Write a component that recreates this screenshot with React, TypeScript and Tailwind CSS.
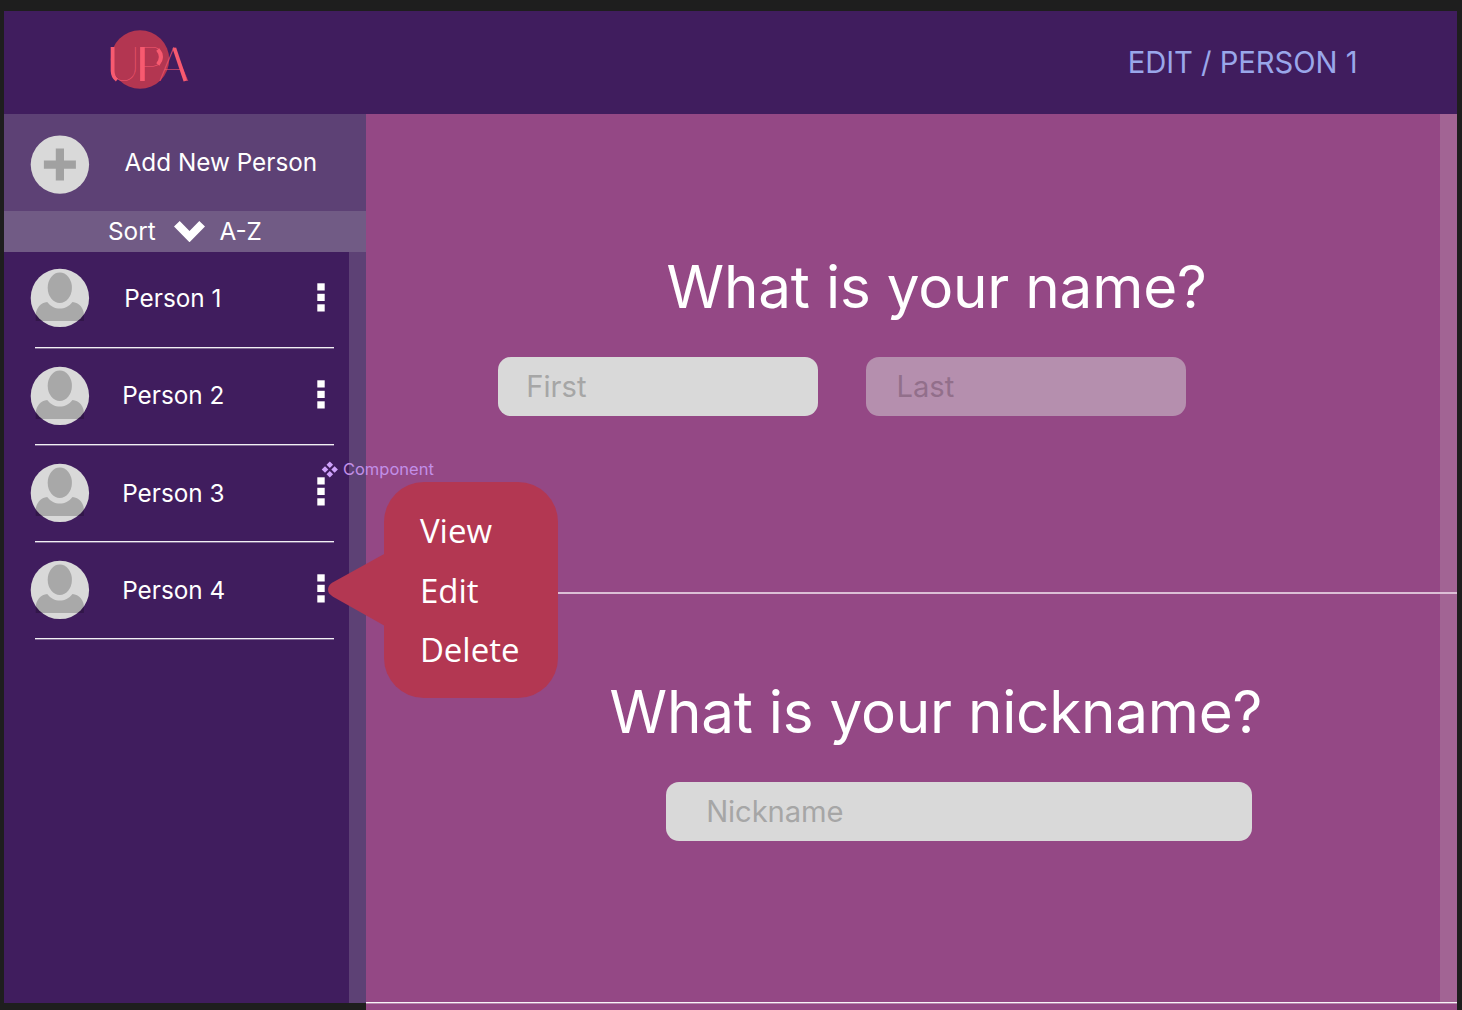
const people = [
  { name: 'Person 1', indent: 'pl-[34.2px]' },
  { name: 'Person 2', indent: 'pl-[32.2px]' },
  { name: 'Person 3', indent: 'pl-[32.2px]' },
  { name: 'Person 4', indent: 'pl-[32.2px]' },
];

function Logo() {
  return (
    <svg className="ml-[96px] mt-[9px] h-[80px] w-[100px]" viewBox="100 20 100 80" aria-label="UPA">
      <circle cx="140" cy="59.5" r="29.2" fill="#b33651" />
      <text x="106.4 138 158.6" y="81" fill="#f75a70" fontFamily="Lato" fontWeight="100" fontSize="47.5">
        UPA
      </text>
      <g stroke="#f75a70" fill="none">
        <path d="M112.6 47V71Q112.8 77 117 80" strokeWidth="3.8" />
        <path d="M142.4 47V81" strokeWidth="4.6" />
        <path d="M157.8 49.5Q164 57 157.8 64.5" strokeWidth="4" />
        <path d="M174.3 48L185.4 81" strokeWidth="3.8" />
      </g>
    </svg>
  );
}

function Avatar() {
  return (
    <svg className="size-[60px] shrink-0" viewBox="-.7 -.7 60 60">
      <circle cx="29.2" cy="29.2" r="29.2" fill="#d9d9d9" />
      <ellipse cx="29.1" cy="19" rx="12.1" ry="15.2" fill="#a8a8a8" />
      <path
        d="M5 52.3V46C5.5 39.5 10 34 16.5 33.4C20 38 24.5 39.9 29.1 39.9S38.3 38 41.8 33.4C48.3 34 53.2 39.5 53.2 46V52.3Z"
        fill="#000"
        fillOpacity=".22"
      />
    </svg>
  );
}

function Dots() {
  return (
    <svg className="h-[29px] w-[8px]" viewBox="0 0 8 29" fill="#fff">
      <rect x=".3" y=".3" width="7.4" height="7.2" />
      <rect x=".3" y="10.8" width="7.4" height="7.2" />
      <rect x=".3" y="21.3" width="7.4" height="7.2" />
    </svg>
  );
}

function PersonRow({ name, indent }: { name: string; indent: string }) {
  return (
    <li className="flex h-[97.2px] flex-col pl-[26px]">
      <div className="flex h-[94.9px] items-center">
        <div className="-mt-[2px]">
          <Avatar />
        </div>
        <span className={`w-[226.9px] shrink-0 -translate-y-[1.4px] whitespace-nowrap ${indent}`}>{name}</span>
        <div className="-mt-[4px]">
          <Dots />
        </div>
      </div>
      <div className="ml-[5.3px] h-[2px] w-[299px] border-t border-white/90 bg-white/35" />
    </li>
  );
}

function Sidebar() {
  return (
    <aside className="flex h-[889px] w-[362px] shrink-0 flex-col bg-[#401d5e] text-[24.3px] text-white">
      <div className="flex h-[96.7px] shrink-0 items-center bg-[#5d4175] pl-[26px]">
        <svg className="mt-[4px] size-[60px]" viewBox="-.7 -1.4 60 60">
          <circle cx="29.2" cy="29.2" r="29.2" fill="#d9d9d9" />
          <path d="M29.2 13.2V45.2M13.2 29.2H45.2" stroke="#a1a1a1" strokeWidth="8.2" />
        </svg>
        <span className="ml-[34.6px]">Add New Person</span>
      </div>
      <div className="flex h-[41.3px] shrink-0 items-center bg-[#715b85] pl-[104px]">
        <span className="w-[66px]">Sort</span>
        <svg className="h-[21.5px] w-[31px]" viewBox="0 0 31 21.5">
          <path d="M0 5.6L5.7 0L15.5 9.9L25.3 0L31 5.6L15.5 21.3Z" fill="#fff" />
        </svg>
        <span className="ml-[14.5px]">A-Z</span>
      </div>
      <div className="flex min-h-0 flex-1">
        <ul className="w-[345px]">
          {people.map((p) => (
            <PersonRow key={p.name} {...p} />
          ))}
        </ul>
        <div className="w-[17px] bg-[#5d4175]" />
      </div>
    </aside>
  );
}

function Questions() {
  return (
    <main className="flex flex-1 bg-[#944885] text-white">
      <div className="flex min-w-0 flex-1 flex-col">
        <section className="h-[479.5px] shrink-0 pt-[138.4px]">
          <h1 className="pl-[300.6px] text-[58.4px] leading-[70px] tracking-[-0.0035em] whitespace-nowrap">
            What is your name?
          </h1>
          <div className="mt-[34.6px] flex gap-[48.4px] pl-[132.3px] text-[29.2px]">
            <div className="flex h-[59.3px] w-[319.7px] items-center rounded-[13px] bg-[#d9d9d9] pl-[28px] text-[#a6a6a6]">First</div>
            <div className="flex h-[59.3px] w-[319.7px] items-center rounded-[13px] bg-[#b58fae] pl-[30px] text-[#926f8b]">Last</div>
          </div>
        </section>
        <section className="h-[408px] shrink-0 pt-[83.8px]">
          <h1 className="pl-[243.6px] text-[58.4px] leading-[70px] tracking-[-0.004em] whitespace-nowrap">
            What is your nickname?
          </h1>
          <div className="mt-[34.7px] ml-[300.2px] flex h-[59.3px] w-[585.6px] items-center rounded-[13px] bg-[#d9d9d9] pl-[40px] text-[29.2px] tracking-[-0.003em] text-[#a6a6a6]">
            Nickname
          </div>
        </section>
      </div>
    </main>
  );
}

function ContextMenu() {
  return (
    <div className="absolute top-[458px] left-[321px] w-[237px]">
      <div className="flex h-[22px] items-center text-[16.5px] text-[#c28fe8]">
        <svg className="mr-[4.9px] size-[17px]" viewBox="-8.8 -8.5 17 17" fill="#cfa2fb">
          <path d="M0-8.1L3.3-4.8L0-1.5L-3.3-4.8ZM0 1.5L3.3 4.8L0 8.1L-3.3 4.8ZM-4.8-3.3L-1.5 0L-4.8 3.3L-8.1 0ZM4.8-3.3L8.1 0L4.8 3.3L1.5 0Z" />
        </svg>
        <span className="pt-px">Component</span>
      </div>
      <div className="mt-[2px] flex items-center">
        <svg className="-mr-px ml-[7px] h-[74px] w-[57.3px]" viewBox="0 0 57.3 74">
          <path d="M57.3 .3L5 29.3Q0 32.3 0 36.5T5 43.7L57.3 73.2Z" fill="#b33752" />
        </svg>
        <div className="flex h-[216px] w-[173.7px] flex-col rounded-[40px] bg-[#b33752] pt-[19px] pl-[35.6px] font-['Open_Sans',sans-serif] text-[33px] leading-[59.7px] text-white">
          <span>View</span>
          <span>Edit</span>
          <span>Delete</span>
        </div>
      </div>
    </div>
  );
}

export default function App() {
  return (
    <div className="relative flex h-[1010px] w-[1462px] flex-col overflow-hidden bg-[#1e1e1e] pt-[11px] pr-[5px] pl-[4px] font-[Inter,sans-serif]">
      <header className="flex h-[103px] shrink-0 justify-between bg-[#401d5e]">
        <Logo />
        <span className="mr-[99.5px] self-center pt-px text-[29.2px] tracking-[-0.001em] text-[#9aa7ea]">EDIT / PERSON 1</span>
      </header>
      <div className="flex min-h-0 flex-1">
        <Sidebar />
        <div className="flex flex-1 flex-col bg-[#944885]">
          <div className="flex h-[888px] shrink-0">
            <Questions />
            <div className="w-[17px] bg-[#a26494]" />
          </div>
          <div className="h-[2px] shrink-0 border-t border-white/90 bg-white/35" />
        </div>
      </div>
      <div className="absolute top-[592px] left-[366px] h-[2px] w-[1091px] bg-[#dcbfd6]" />
      <ContextMenu />
    </div>
  );
}
